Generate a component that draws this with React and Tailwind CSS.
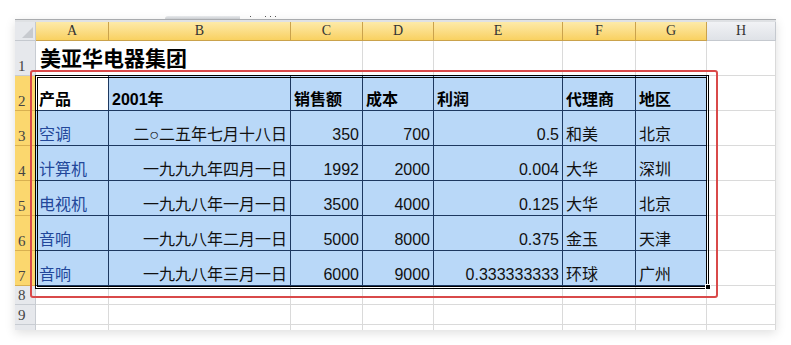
import React from 'react';

const cols = ['A', 'B', 'C', 'D', 'E', 'F', 'G', 'H'];

const header = ['产品', '2001年', '销售额', '成本', '利润', '代理商', '地区'];

const rows = [
  ['空调', '二○二五年七月十八日', '350', '700', '0.5', '和美', '北京'],
  ['计算机', '一九九九年四月一日', '1992', '2000', '0.004', '大华', '深圳'],
  ['电视机', '一九九八年一月一日', '3500', '4000', '0.125', '大华', '北京'],
  ['音响', '一九九八年二月一日', '5000', '8000', '0.375', '金玉', '天津'],
  ['音响', '一九九八年三月一日', '6000', '9000', '0.333333333', '环球', '广州'],
];

// which columns are right-aligned in data rows
const rightCols = [false, true, true, true, true, false, false];

const font = "font-['Liberation_Sans','Noto_Sans_CJK_SC',sans-serif]";
const serif = "font-['Liberation_Serif','Noto_Sans_CJK_SC',serif]";

const ColHead = ({ label, active }) => (
  <div
    className={`flex items-end justify-center pb-[1px] text-[14px] leading-[17px] text-[#333] ${serif} border-r border-b ${
      active
        ? 'bg-gradient-to-b from-[#fdeaa8] to-[#f9d160] border-[#caa24c]'
        : 'bg-gradient-to-b from-[#f1f2f5] to-[#dfe2e7] border-[#c5c9cf]'
    }`}
  >
    {label}
  </div>
);

const RowHead = ({ n, active }) => (
  <div
    className={`flex items-end justify-start pl-[3px] text-[15px] leading-[17px] text-[#444] ${serif} border-r border-b ${
      active ? 'bg-[#fbd76e] border-[#d9b050]' : 'bg-[#e6e8ec] border-[#c8ccd2]'
    }`}
  >
    {n}
  </div>
);

const Cell = ({ children, right, bold, blue, data, white }) => (
  <div
    className={`flex items-end px-[3px] pb-[1px] text-[16px] leading-[19px] whitespace-nowrap overflow-hidden ${font} border-r border-b ${
      right ? 'justify-end' : 'justify-start'
    } ${bold ? 'font-bold text-black' : blue ? 'text-[#22479a]' : 'text-[#111]'} ${
      data ? (white ? 'bg-white border-[#1d3860]' : 'bg-[#b9d8f8] border-[#1d3860]') : 'bg-white border-[#dadada]'
    }`}
  >
    {children}
  </div>
);

export default function App() {
  return (
    <div className="w-[791px] h-[345px] bg-white relative overflow-hidden">
      {/* bits of the toolbar peeking above the sheet */}
      <div className="h-[19px] flex items-end pl-[165px] gap-[10px]">
        <div className="w-[75px] h-[3px] bg-gradient-to-b from-[#e8eaec] to-[#c9ccd0] rounded-tl-[3px]" />
        <div className="flex gap-[4px] pb-[2px]">
          <span className="w-[1px] h-[1px] bg-[#555]" />
          <span className="w-[1px] h-[1px] bg-white" />
          <span className="w-[1px] h-[1px] bg-white" />
          <span className="w-[1px] h-[1px] bg-[#555]" />
          <span className="w-[1px] h-[1px] bg-[#555]" />
          <span className="w-[1px] h-[1px] bg-[#555]" />
        </div>
      </div>

      <div className="ml-[15px] w-[761px] h-[311px] bg-white shadow-[0_3px_10px_rgba(0,0,0,0.13)] overflow-hidden">
        <div className="h-[3px] border-t border-[#a9abae] bg-[#dfe1e4]" />
        <div className="relative">
          <div className="grid grid-cols-[21px_73px_182px_72px_71px_129px_73px_71px_69px] grid-rows-[19px_35px_35px_35px_35px_35px_35px_35px_19px_20px_19px]">
            {/* select all corner */}
            <div className="relative bg-[#e6e8ec] border-r border-b border-[#c5c9cf]">
              <div className="absolute right-[2px] bottom-[2px] w-0 h-0 border-l-[11px] border-l-transparent border-b-[11px] border-b-[#c7cacf]" />
            </div>
            {cols.map((c) => (
              <ColHead key={c} label={c} active={c !== 'H'} />
            ))}

            {/* row 1 */}
            <RowHead n={1} />
            <div className={`col-span-3 flex items-end pl-[4px] pb-[3px] text-[21px] leading-[26px] font-bold text-black ${font} border-b border-r border-[#dadada] bg-white`}>
              美亚华电器集团
            </div>
            {[0, 1, 2, 3, 4].map((i) => (
              <Cell key={i} />
            ))}

            {/* row 2 header */}
            <RowHead n={2} active />
            {header.map((h, i) => (
              <Cell key={h} bold data white={i === 0}>
                {h}
              </Cell>
            ))}
            <Cell />

            {rows.map((r, ri) => (
              <React.Fragment key={ri}>
                <RowHead n={ri + 3} active />
                {r.map((v, ci) => (
                  <Cell key={ci} data right={rightCols[ci]} blue={ci === 0}>
                    {v}
                  </Cell>
                ))}
                <Cell />
              </React.Fragment>
            ))}

            {[8, 9, 10].map((n) => (
              <React.Fragment key={n}>
                <RowHead n={n === 10 ? '' : n} />
                {[0, 1, 2, 3, 4, 5, 6, 7].map((i) => (
                  <Cell key={i} />
                ))}
              </React.Fragment>
            ))}
          </div>

          {/* double border round the selection */}
          <div className="absolute left-[20px] top-[53px] w-[674px] h-[214px] border-[3px] border-double border-black pointer-events-none" />
          {/* fill handle */}
          <div className="absolute left-[690px] top-[262px] w-[6px] h-[6px] bg-black border border-white pointer-events-none" />
          {/* red annotation */}
          <div className="absolute left-[15px] top-[48px] w-[688px] h-[228px] border-2 border-[#d94a4a] rounded-[3px] pointer-events-none" />
        </div>
      </div>
    </div>
  );
}
